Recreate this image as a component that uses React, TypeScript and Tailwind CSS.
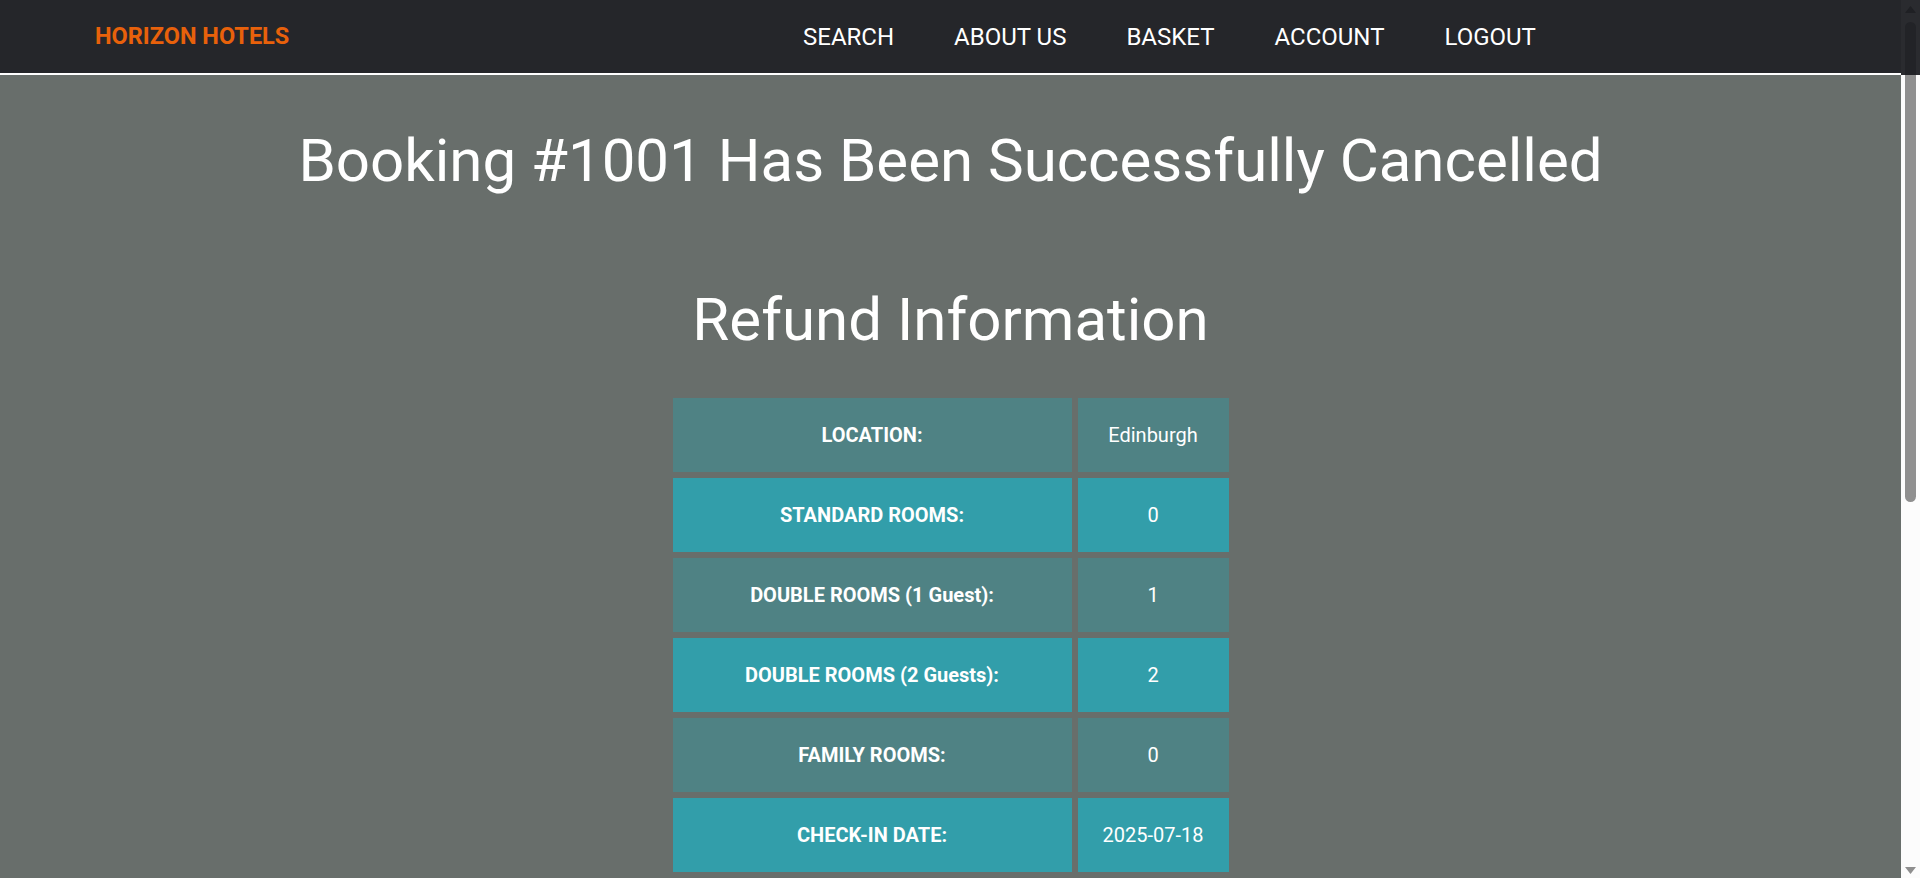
import React from "react";

const rows: { label: string; value: string }[] = [
  { label: "LOCATION:", value: "Edinburgh" },
  { label: "STANDARD ROOMS:", value: "0" },
  { label: "DOUBLE ROOMS (1 Guest):", value: "1" },
  { label: "DOUBLE ROOMS (2 Guests):", value: "2" },
  { label: "FAMILY ROOMS:", value: "0" },
  { label: "CHECK-IN DATE:", value: "2025-07-18" },
  { label: "CHECK-OUT DATE:", value: "2025-07-21" },
  { label: "TOTAL PAID:", value: "£540.00" },
  { label: "REFUND PERCENTAGE:", value: "100%" },
  { label: "REFUND AMOUNT:", value: "£540.00" },
];

function FakeScrollbar() {
  return (
    <div className="fixed right-0 top-0 z-20 flex h-screen w-[19px] flex-col">
      <div className="relative h-[75px] bg-[#2a2b2f]">
        <svg className="absolute left-[4px] top-[6px]" width="11" height="7" viewBox="0 0 11 7">
          <polygon points="5.5,0 11,7 0,7" fill="#1f2024" />
        </svg>
        <div className="absolute left-[4px] top-[22px] h-[53px] w-[11px] rounded-t-full bg-[#222327]" />
      </div>
      <div className="relative flex-1 bg-[#fcfcfc]">
        <div className="absolute left-[4px] top-0 h-[427px] w-[11px] rounded-b-full bg-[#8f8f8f]" />
        <svg className="absolute bottom-[4px] left-[4px]" width="11" height="7" viewBox="0 0 11 7">
          <polygon points="0,0 11,0 5.5,7" fill="#8f8f8f" />
        </svg>
      </div>
    </div>
  );
}

export default function App() {
  return (
    <div
      className="min-h-screen bg-[#686e6b] text-white"
      style={{ fontFamily: "Roboto, 'Liberation Sans', Arial, sans-serif" }}
    >
      <nav className="sticky top-0 z-10 flex h-[75px] items-center border-b-2 border-white bg-[#25262a] pl-[95px]">
        <div className="w-[193px] whitespace-nowrap text-[23.5px] font-bold text-[#e8610b]">
          HORIZON HOTELS
        </div>
        <ul className="ml-[515px] flex items-center gap-[60px] text-[24px]">
          <li>SEARCH</li>
          <li>ABOUT US</li>
          <li>BASKET</li>
          <li>ACCOUNT</li>
          <li>LOGOUT</li>
        </ul>
      </nav>
      <main className="flex flex-col items-center pr-[19px] pt-[56px] pb-[200px]">
        <h1 className="text-[60px] leading-none font-normal">
          Booking #1001 Has Been Successfully Cancelled
        </h1>
        <h2 className="mt-[99px] text-[60px] leading-none font-normal">Refund Information</h2>
        <div className="mt-[48px] grid grid-cols-[399px_151px] gap-[6px] text-[20px]">
          {rows.map((r, i) => {
            const bg = i % 2 === 0 ? "bg-[#4f8284]" : "bg-[#329eaa]";
            return (
              <React.Fragment key={r.label}>
                <div className={`flex h-[74px] items-center justify-center font-bold ${bg}`}>
                  {r.label}
                </div>
                <div className={`flex h-[74px] items-center justify-center ${bg}`}>
                  {r.value}
                </div>
              </React.Fragment>
            );
          })}
        </div>
      </main>
      <FakeScrollbar />
    </div>
  );
}
